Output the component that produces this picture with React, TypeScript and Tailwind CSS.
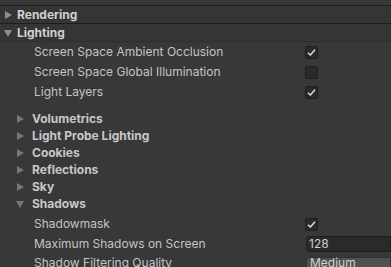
import React from 'react';

const Arrow = ({ open, dim }: { open?: boolean; dim?: boolean }) => (
  <svg width="10" height="10" viewBox="0 0 10 10" className="shrink-0">
    {open ? (
      <polygon points="1,2 9,2 5,9" fill={dim ? '#767676' : '#8f8f8f'} />
    ) : (
      <polygon points="2,1 2,9 9,5" fill={dim ? '#767676' : '#8f8f8f'} />
    )}
  </svg>
);

const Check = ({ on }: { on?: boolean }) => (
  <div className="w-[13px] h-[13px] rounded-[2px] bg-[#2a2a2a] border border-[#1e1e1e] flex items-center justify-center">
    {on && (
      <svg width="9" height="9" viewBox="0 0 9 9">
        <polyline points="1,4.8 3.4,7 8,1.8" fill="none" stroke="#e0e0e0" strokeWidth="1.5" />
      </svg>
    )}
  </div>
);

const Header = ({ title, open }: { title: string; open?: boolean }) => (
  <div className="h-[17px] bg-[#353535] border-t border-[#1e1e1e] flex items-center box-content pl-[3px]">
    <Arrow open={open} />
    <span className="ml-[4px] font-bold text-[#d0d0d0]">{title}</span>
  </div>
);

const Prop = ({ label, children }: { label: string; children?: React.ReactNode }) => (
  <div className="h-[20px] flex items-center">
    <span className="pl-[34px] w-[305px] shrink-0 text-[#c4c4c4] whitespace-nowrap">{label}</span>
    {children}
  </div>
);

const Sub = ({ title, open }: { title: string; open?: boolean }) => (
  <div className="h-[17px] flex items-center pl-[15px]">
    <Arrow open={open} dim />
    <span className="ml-[7px] font-bold text-[#c8c8c8]">{title}</span>
  </div>
);

export default function App() {
  return (
    <div
      className="w-[391px] h-[267px] overflow-hidden bg-[#383838] text-[12px] leading-none"
      style={{ fontFamily: 'Inter, "Noto Sans", sans-serif' }}
    >
      <div className="h-[5px] bg-[#383838]" />
      <Header title="Rendering" />
      <Header title="Lighting" open />
      <div className="border-t border-[#2e2e2e]">
        <div>
          <Prop label="Screen Space Ambient Occlusion"><Check on /></Prop>
          <Prop label="Screen Space Global Illumination"><Check /></Prop>
          <Prop label="Light Layers"><Check on /></Prop>
        </div>
        <div className="pt-[8px]">
          <Sub title="Volumetrics" />
          <Sub title="Light Probe Lighting" />
          <Sub title="Cookies" />
          <Sub title="Reflections" />
          <Sub title="Sky" />
          <Sub title="Shadows" open />
        </div>
        <div className="pt-[2px]">
          <Prop label="Shadowmask"><Check on /></Prop>
          <Prop label="Maximum Shadows on Screen">
            <div className="flex-1 h-[16px] ml-[1px] bg-[#2a2a2a] border border-[#1e1e1e] rounded-l-[3px] flex items-center pl-[2px] text-[#d2d2d2]">
              128
            </div>
          </Prop>
          <div className="h-[20px] flex">
            <span className="pl-[34px] w-[305px] shrink-0 text-[#c4c4c4] whitespace-nowrap pt-[3px] leading-[12px]">
              Shadow Filtering Quality
            </span>
            <div className="flex-1 h-[18px] mt-[3px] ml-[1px] bg-[#515151] border border-[#303030] rounded-l-[3px] pl-[3px] text-[#d2d2d2] leading-[9px]">
              Medium
            </div>
          </div>
        </div>
      </div>
    </div>
  );
}
